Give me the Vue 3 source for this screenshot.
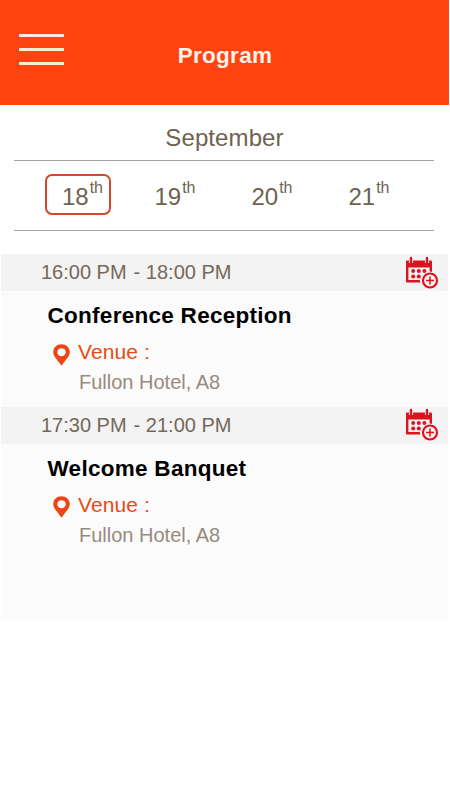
<script setup>
import { ref } from 'vue'

const days = [18, 19, 20, 21]
const activeDay = ref(18)

const events = [
  { id: 1, time: ['16:00 PM', '- 18:00 PM'], title: 'Conference Reception', venue: 'Fullon Hotel, A8' },
  { id: 2, time: ['17:30 PM', '- 21:00 PM'], title: 'Welcome Banquet', venue: 'Fullon Hotel, A8' },
]
</script>

<template>
  <div class="page">
    <header class="topbar">
      <button class="menu" aria-label="Menu">
        <span></span>
        <span></span>
        <span></span>
      </button>
      <h1>Program</h1>
    </header>

    <section class="calendar">
      <div class="month">September</div>
      <nav class="days">
        <button
          v-for="day in days"
          :key="day"
          class="day"
          :class="{ active: day === activeDay }"
          @click="activeDay = day"
        >{{ day }}<sup>th</sup></button>
      </nav>
    </section>

    <main class="events">
      <article v-for="event in events" :key="event.id" class="event">
        <div class="time">
          <div class="range">
            <span v-for="part in event.time" :key="part">{{ part }}</span>
          </div>
          <svg class="add" width="34" height="34" viewBox="0 0 34 34">
            <path d="M2 4.5H26Q27 4.5 27 5.5V16H24.6V11.5H3.4V24.1H15V26.5H2Q1 26.5 1 25.5V5.5Q1 4.5 2 4.5Z" fill="#d9141e" />
            <path d="M6 2V7M22 2V7" stroke="#f3f3f3" stroke-width="4.2" />
            <path d="M6 2V6.5M22 2V6.5" stroke="#d9141e" stroke-width="2.4" stroke-linecap="round" />
            <g fill="#d9141e">
              <circle cx="8.2" cy="15" r="2" />
              <circle cx="13.8" cy="15" r="2" />
              <circle cx="19.4" cy="15" r="2" />
              <circle cx="8.2" cy="20.4" r="2" />
              <circle cx="13.8" cy="20.4" r="2" />
            </g>
            <circle cx="25" cy="24.5" r="8.9" fill="#f3f3f3" />
            <circle cx="25" cy="24.5" r="7" fill="#fbeeee" stroke="#d9141e" stroke-width="2.2" />
            <path d="M25 20.5V28.5M21 24.5H29" stroke="#d9141e" stroke-width="1.5" />
          </svg>
        </div>
        <h2>{{ event.title }}</h2>
        <div class="venue">
          <svg width="17" height="22" viewBox="0 0 16 22" preserveAspectRatio="none">
            <path
              d="M8 0.3C3.6 0.3 0.2 3.7 0.2 8C0.2 12.6 4.6 16.4 8 21.7C11.4 16.4 15.8 12.6 15.8 8C15.8 3.7 12.4 0.3 8 0.3ZM8 4.2A4 4 0 1 1 8 12.2A4 4 0 1 1 8 4.2Z"
              fill="#ec4513"
              fill-rule="evenodd"
            />
          </svg>
          <span>Venue :</span>
        </div>
        <p>{{ event.venue }}</p>
      </article>
    </main>
  </div>
</template>

<style>
body {
  background: #fff;
}
</style>

<style scoped>
.page {
  width: 450px;
  height: 800px;
  overflow: hidden;
  background: #fff;
  font-family: "Liberation Sans", Arial, sans-serif;
}

button {
  padding: 0;
  border: 0;
  background: none;
  font-family: inherit;
  cursor: pointer;
}

.topbar {
  display: grid;
  grid-template-columns: 64px 1fr 64px;
  box-sizing: border-box;
  width: 449px;
  height: 105px;
  background: #ff4411;
}

.menu {
  display: flex;
  flex-direction: column;
  gap: 10.5px;
  padding: 34px 0 0 19px;
}

.menu span {
  width: 45px;
  height: 3.4px;
  background: #ffe9dc;
}

h1 {
  margin: 0;
  padding: 6px 0 0 1px;
  color: #fff3ea;
  font-size: 22.5px;
  letter-spacing: 0.3px;
  line-height: 99px;
  text-align: center;
}

.calendar {
  margin: 0 16px 0 14px;
  color: #6e6250;
}

.month {
  padding: 10px 0 0 1px;
  border-bottom: 1px solid #a5a5a5;
  font-size: 24px;
  letter-spacing: 0.1px;
  line-height: 45px;
  text-align: center;
}

.days {
  display: flex;
  gap: 31px;
  padding: 13px 0 15px 31px;
  border-bottom: 1px solid #a5a5a5;
}

.day {
  box-sizing: border-box;
  width: 66px;
  height: 41px;
  padding: 3px 0 0;
  border: 2px solid transparent;
  border-radius: 7px;
  color: #6e6250;
  font-size: 24px;
  line-height: 36px;
  text-align: center;
  white-space: nowrap;
}

.day:first-child {
  padding-left: 9px;
}

.day.active {
  border-color: #d4472a;
}

.day sup {
  margin-left: 1px;
  font-size: 16px;
  line-height: 0;
  vertical-align: 12px;
}

.events {
  width: 447px;
  height: 367px;
  margin: 23px 0 0 1px;
  background: #fbfbfb;
}

.event {
  height: 152.5px;
}

.time {
  display: flex;
  align-items: center;
  justify-content: space-between;
  height: 37px;
  padding: 0 9px 0 40px;
  background: #f3f3f3;
  color: #74695a;
  font-size: 20px;
}

.range {
  display: flex;
  gap: 7px;
}

h2 {
  margin: 10px 0 0 46.5px;
  color: #000;
  font-size: 22.5px;
  letter-spacing: 0.28px;
  line-height: 30px;
}

.venue {
  display: flex;
  align-items: center;
  gap: 8px;
  margin: 6px 0 0 52px;
  color: #e84a18;
  font-size: 21px;
  letter-spacing: 0.1px;
  line-height: 30px;
}

.venue svg {
  margin-top: 5px;
}

p {
  margin: 0 0 0 78px;
  color: #998a7e;
  font-size: 20px;
  line-height: 30px;
}
</style>
